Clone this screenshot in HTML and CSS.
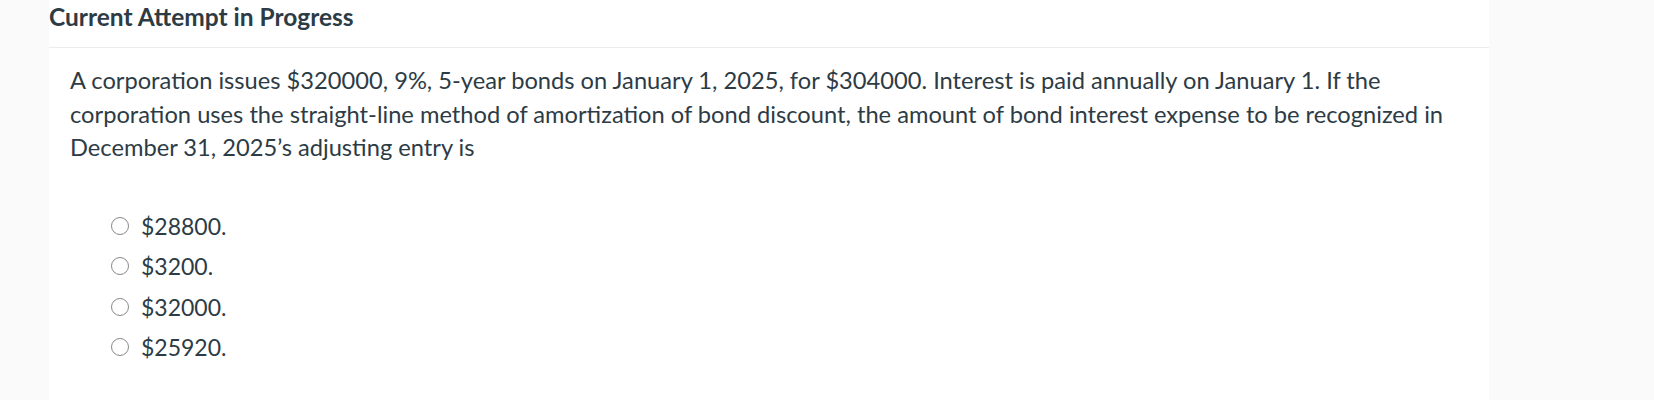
FILE: index.html
```html
<!DOCTYPE html>
<html lang="en">
<head>
<meta charset="utf-8">
<title>Current Attempt in Progress</title>
<link rel="stylesheet" href="styles.css">
</head>
<body>
<main class="panel">
  <header class="panel-header">
    <h2 class="panel-title">Current Attempt in Progress</h2>
  </header>
  <section class="question">
    <p class="question-text">A corporation issues $320000, 9%, 5-year bonds on January 1, 2025, for $304000. Interest is paid annually on January 1. If the corporation uses the straight-line method of amortization of bond discount, the amount of bond interest expense to be recognized in December 31, 2025’s adjusting entry is</p>
    <ul class="options">
      <li class="option"><span class="radio"></span><span class="option-label">$28800.</span></li>
      <li class="option"><span class="radio"></span><span class="option-label">$3200.</span></li>
      <li class="option"><span class="radio"></span><span class="option-label">$32000.</span></li>
      <li class="option"><span class="radio"></span><span class="option-label">$25920.</span></li>
    </ul>
  </section>
</main>
</body>
</html>
```

FILE: styles.css
```css
html, body {
  margin: 0;
  padding: 0;
}

body {
  background: #fafafa;
  font-family: Lato, "Open Sans", "Liberation Sans", sans-serif;
  color: #2d3b45;
  height: 400px;
  overflow: hidden;
}

.panel {
  margin-left: 49px;
  width: 1440px;
  min-height: 400px;
  background: #ffffff;
}

.panel-header {
  height: 47px;
  border-bottom: 1px solid #ececec;
}

.panel-title {
  margin: 0;
  padding-top: 2px;
  font-size: 24.5px;
  line-height: 30px;
  font-weight: 700;
  color: #2d3b45;
}

.question {
  padding: 16px 20px 0 21px;
}

.question-text {
  margin: 0;
  font-size: 23.68px;
  line-height: 33.5px;
}

.options {
  list-style: none;
  margin: 41px 0 0 0;
  padding: 0 0 0 41px;
}

.option {
  display: flex;
  align-items: center;
  gap: 12px;
  height: 40.5px;
  font-size: 23px;
}

.radio {
  box-sizing: border-box;
  width: 18px;
  height: 18px;
  border: 1.6px solid #8a8a8a;
  border-radius: 50%;
  flex: none;
}

.option-label {
  line-height: 40.5px;
}
```
